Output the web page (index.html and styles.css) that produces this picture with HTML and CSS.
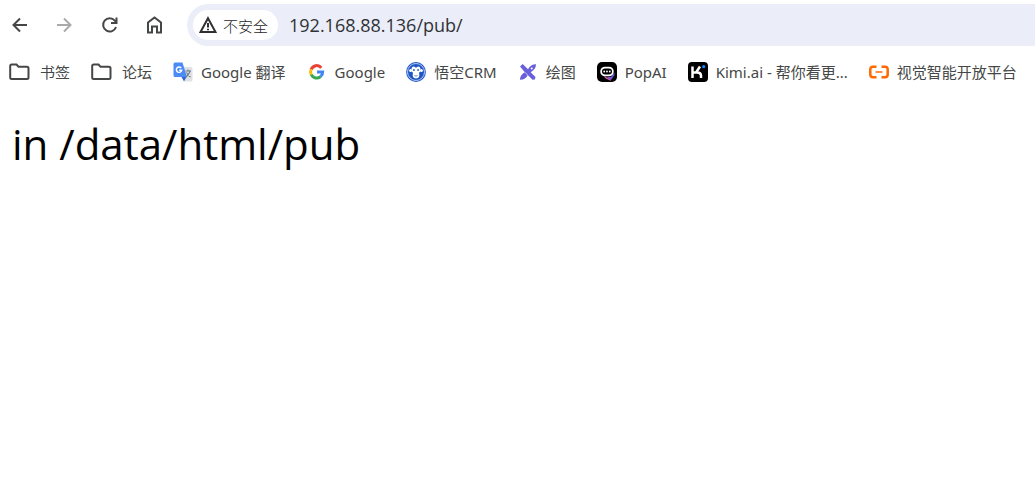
FILE: index.html
```html
<!DOCTYPE html>
<html lang="zh-CN">
<head>
<meta charset="utf-8">
<meta name="viewport" content="width=device-width, initial-scale=1">
<title>192.168.88.136/pub/</title>
<link rel="stylesheet" href="styles.css">
</head>
<body>
<header class="browser">
  <div class="toolbar">
    <nav class="controls" aria-label="导航">
      <button class="control" type="button" aria-label="后退"><svg class="icon" viewBox="0 0 20 20"><path d="M17 10H4M10 3.500 3.500 10l6.500 6.500"/></svg></button>
      <button class="control control-off" type="button" aria-label="前进" disabled><svg class="icon" viewBox="0 0 20 20"><path d="M2 10h13M9 3.500 15.500 10 9 16.500"/></svg></button>
      <button class="control" type="button" aria-label="重新加载"><svg class="icon" viewBox="0 0 20 20"><path d="M16 12A6.600 6.600 0 1 1 14.800 5.700L16.500 7.500M16.500 2.500V8h-5.500"/></svg></button>
      <button class="control" type="button" aria-label="主页"><svg class="icon" viewBox="0 0 20 20"><path d="M3 17.500V7.500L9.500 2.500 16 7.500v10h-4v-6H7v6z"/></svg></button>
    </nav>
    <form class="omnibox">
      <button class="security" type="button"><svg class="warning" viewBox="0 0 18 18"><path d="M9 2.200 16.500 16h-15z"/><path d="M9 7v4.500M9 12.700v1.500"/></svg>不安全</button>
      <input class="address" type="text" aria-label="地址" value="192.168.88.136/pub/">
    </form>
  </div>
  <nav class="bookmarks" aria-label="书签栏">
    <a class="bookmark folder" href="#"><svg class="favicon line" viewBox="0 0 21 20"><path d="M1.200 15.500V4Q1.200 2.500 2.700 2.500H7.500L9.500 4.700H18Q19.500 4.700 19.500 6.200V15.500Q19.500 17 18 17H2.700Q1.200 17 1.200 15.500z"/></svg>书签</a>
    <a class="bookmark folder" href="#"><svg class="favicon line" viewBox="0 0 21 20"><path d="M1.200 15.500V4Q1.200 2.500 2.700 2.500H7.500L9.500 4.700H18Q19.500 4.700 19.500 6.200V15.500Q19.500 17 18 17H2.700Q1.200 17 1.200 15.500z"/></svg>论坛</a>
    <a class="bookmark" href="#"><svg class="favicon" viewBox="0 0 20 20"><path fill="#dfe1e5" d="M7 5h11q1.500 0 1.500 1.500v11.500q0 1.500-1.500 1.500h-6.500z"/><path fill="#3367d6" d="m8.500 15 5 0-2.500 4.500z"/><path fill="#4b8bf5" d="M2 .5h7.500l4.500 14.500H2Q.5 15 .5 13.500V2Q.5 .5 2 .5z"/><path fill="none" stroke="#fff" stroke-width="1.400" d="M8.200 6A2.700 2.700 0 1 0 8.700 8.200H6.200"/><path fill="none" stroke="#6d7e88" stroke-width="1.100" d="M12.500 9H18M15 7.500V9M17 9q-1 4-4 6M13.500 10.500q1.500 3 4 4.500"/></svg>Google 翻译</a>
    <a class="bookmark" href="#"><svg class="favicon" viewBox="0 0 20 20"><g fill="none" stroke-width="3"><path stroke="#ea4335" d="M4.200 7.300A6 6 0 0 1 14.300 5.700"/><path stroke="#fbbc05" d="M4.200 7.300A6 6 0 0 0 4.200 12.700"/><path stroke="#34a853" d="M4.200 12.700A6 6 0 0 0 13.500 14.600"/><path stroke="#4285f4" d="M13.500 14.600A6 6 0 0 0 15.700 10H10"/></g></svg>Google</a>
    <a class="bookmark" href="#"><svg class="favicon" viewBox="0 0 20 20"><circle cx="10" cy="10" r="9.900" fill="#1f56c5"/><circle cx="10" cy="10" r="8.500" fill="none" stroke="#dce7fb" stroke-width=".8"/><circle cx="4.600" cy="8.500" r="1.500" fill="#fff"/><circle cx="15.400" cy="8.500" r="1.500" fill="#fff"/><path fill="#fff" d="M10 5.800Q13.500 2.800 14.500 6.500q.5 2.500-1.500 4.500 1.500 5-3 5.500-4.500-.5-3-5.500-2-2-1.500-4.500Q6.500 2.800 10 5.800z"/><circle cx="7.900" cy="8" r=".9" fill="#1f56c5"/><circle cx="12.100" cy="8" r=".9" fill="#1f56c5"/><path fill="none" stroke="#1f56c5" stroke-width=".7" d="M8.500 13.500q1.500 1.200 3 0"/></svg>悟空CRM</a>
    <a class="bookmark" href="#"><svg class="favicon" viewBox="0 0 20 20"><path fill="#6960dc" d="M2 4.500 4.700 2 10 7.200Q13 2 18 2.200 18 7 12.700 10.200L17.500 15 16.800 17.500 14.500 17.800 9.700 13.100Q8 17.800 2 17.800 2 13 6.800 10.200z"/><path fill="none" stroke="#fff" stroke-width=".6" d="m7 10.200 2.700 2.900"/><circle cx="13.700" cy="6.600" r="1" fill="#fff"/></svg>绘图</a>
    <a class="bookmark" href="#"><svg class="favicon" viewBox="0 0 20 20"><rect width="20" height="20" rx="5"/><path fill="#725bd9" d="m14 15 3.500-4.500V13L14 18l-4-3z"/><path fill="#da5eb1" d="m7 14 6 3 1 2-6-3z"/><rect x="3.300" y="4.700" width="13.400" height="9.600" rx="4.600" fill="#fff"/><rect x="5" y="6.500" width="10" height="6" rx="3"/><g fill="#fff"><circle cx="7.200" cy="9.500" r=".9"/><circle cx="10" cy="9.500" r=".9"/><circle cx="12.800" cy="9.500" r=".9"/></g></svg>PopAI</a>
    <a class="bookmark" href="#"><svg class="favicon" viewBox="0 0 20 20"><rect width="20" height="20" rx="4"/><path fill="none" stroke="#fff" stroke-width="2.500" d="M4.500 4.500v11.500M4.500 10.500H9q4 0 4 3V16M8 10.500l4-6"/><circle cx="15.700" cy="4.700" r="1.600" fill="#1783ff"/></svg>Kimi.ai - 帮你看更...</a>
    <a class="bookmark" href="#"><svg class="favicon" viewBox="0 0 20 20"><path fill="none" stroke="#ff6a00" stroke-width="2.500" d="M7.500 4.700H4Q1.300 4.700 1.300 7.400v5.200q0 2.700 2.700 2.700h3.500M12.500 4.700H16q2.700 0 2.700 2.700v5.200q0 2.700-2.700 2.700h-3.500"/><path stroke="#ff6a00" stroke-width="1.500" d="M6.500 10h7"/></svg>视觉智能开放平台</a>
  </nav>
</header>
<main class="page">in /data/html/pub</main>
</body>
</html>
```
FILE: styles.css
```css
* { box-sizing: border-box; }
body {
  margin: 0;
  background: #fff;
  color: #000;
  font-family: "Open Sans", "Noto Sans CJK SC", sans-serif;
}
button, input { font: inherit; border: 0; }
.toolbar {
  display: flex;
  align-items: center;
  gap: 17px;
  padding-top: 4px;
}
.controls {
  display: flex;
  gap: 15px;
  padding-left: 5px;
}
.control {
  display: grid;
  place-items: center;
  width: 30px;
  height: 30px;
  padding: 0;
  border-radius: 50%;
  background: none;
}
.icon {
  width: 20px;
  height: 20px;
  fill: none;
  stroke: #454746;
  stroke-width: 2;
}
.control-off .icon { stroke: #aaa; }
.omnibox {
  display: flex;
  flex: 1;
  align-items: center;
  gap: 11px;
  height: 42px;
  padding-left: 6px;
  border-radius: 21px 0 0 21px;
  background: #ebeef8;
}
.security {
  display: flex;
  align-items: center;
  gap: 6px;
  height: 30px;
  padding: 0 10px 0 6px;
  border-radius: 15px;
  background: #fff;
  color: #1f1f1f;
  font-size: 15px;
  font-weight: 300;
  white-space: nowrap;
}
.warning {
  width: 18px;
  height: 18px;
  fill: none;
  stroke: #303030;
  stroke-width: 2;
}
.address {
  flex: 1;
  min-width: 0;
  padding: 0;
  background: none;
  color: #303236;
  font-size: 18px;
}
.bookmarks {
  display: flex;
  gap: 21px;
  height: 52px;
  padding-left: 9px;
  overflow: hidden;
  font-family: "Noto Sans", "Noto Sans CJK SC", sans-serif;
}
.bookmark {
  display: flex;
  flex: none;
  align-items: center;
  gap: 8px;
  color: #454746;
  font-size: 15px;
  line-height: 20px;
  text-decoration: none;
  white-space: nowrap;
}
.folder { gap: 10px; }
.favicon {
  width: 20px;
  height: 20px;
}
.line {
  width: 21px;
  fill: none;
  stroke: #454746;
  stroke-width: 2;
}
.page {
  padding: 16px 12px;
  font-size: 42px;
  line-height: 60px;
}
```
